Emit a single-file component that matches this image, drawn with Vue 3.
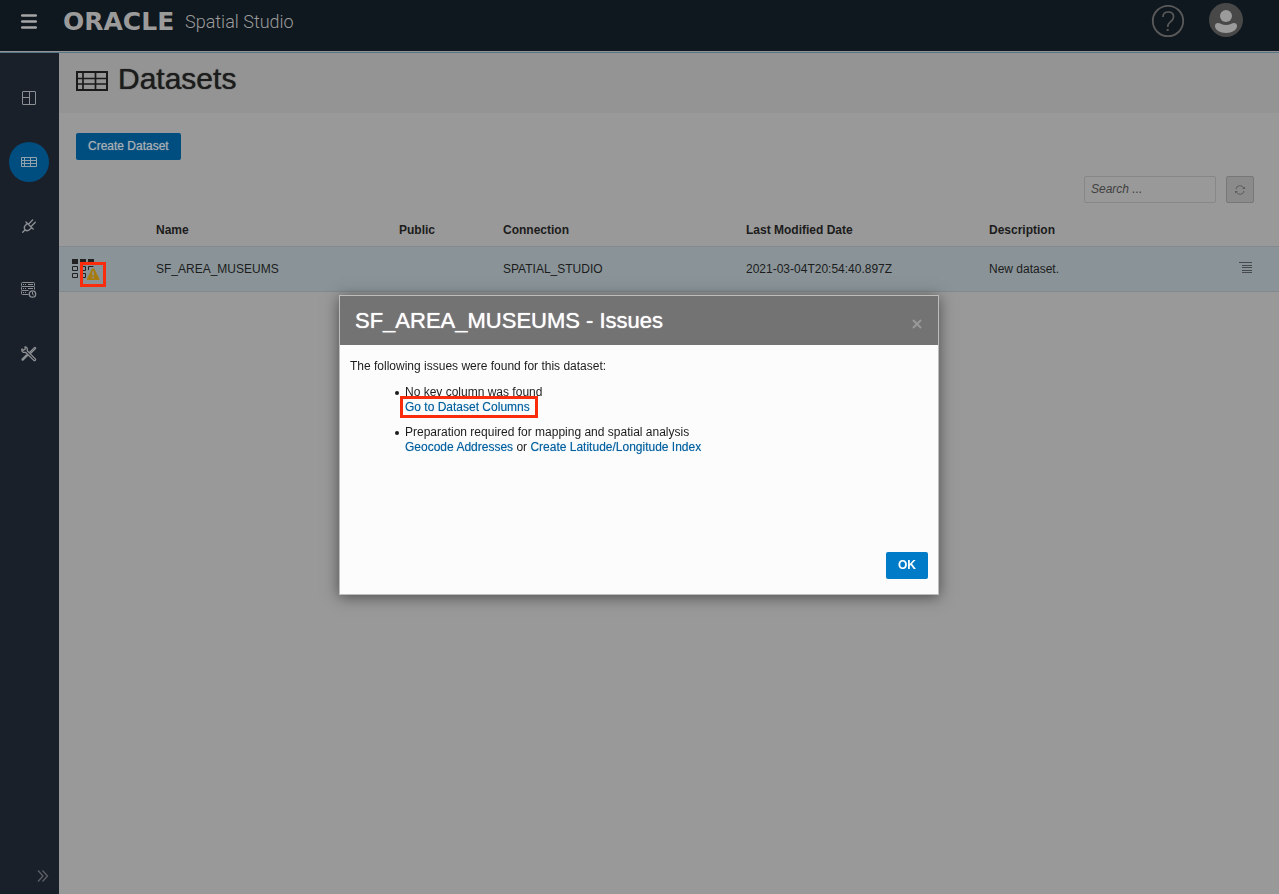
<script setup>
import { ref } from 'vue'

const query = ref('')
const columns = ['Name', 'Public', 'Connection', 'Last Modified Date', 'Description']
const rows = [
  {
    name: 'SF_AREA_MUSEUMS',
    shared: '',
    connection: 'SPATIAL_STUDIO',
    modified: '2021-03-04T20:54:40.897Z',
    description: 'New dataset.',
  },
]
</script>

<template>
  <div class="app">
    <header class="topbar">
      <button class="plain menu" aria-label="Menu">
        <svg width="16" height="16" viewBox="0 0 16 16"><path d="M1.200 2.500h13.600M1.200 8.500h13.600M1.200 14.500h13.600" stroke="#a5a5a5" stroke-width="2.600" stroke-linecap="round" /></svg>
      </button>
      <div class="brand"><span class="oracle">ORACLE</span><span class="product">Spatial Studio</span></div>
      <button class="plain help" aria-label="Help">
        <svg width="34" height="34" viewBox="0 0 34 34" fill="none" stroke="#595959">
          <circle cx="17" cy="17" r="15.2" stroke-width="1.8" />
          <path d="M12 13c0-3.300 2-5 5.300-5s5.300 1.800 5.300 4.700c0 2.500-1.500 3.700-3.300 5.200-1.800 1.400-2.600 2.300-2.600 5" stroke-width="1.700" />
          <path d="M15.700 26h2" stroke-width="2" />
        </svg>
      </button>
      <button class="plain user" aria-label="Account">
        <svg width="34" height="34" viewBox="0 0 34 34">
          <circle cx="17" cy="17" r="17" fill="#484848" />
          <circle cx="17" cy="13" r="6" fill="#9b9b9b" />
          <path d="M9 20c2 0 4 2 8 2s6-2 8-2c2 0 3 1 3 3 0 4-5 7-11 7S6 27 6 23c0-2 1-3 3-3z" fill="#9b9b9b" />
        </svg>
      </button>
    </header>

    <div class="body">
      <nav class="sidebar" aria-label="Main">
        <button class="plain nav-item" aria-label="Projects">
          <svg width="14" height="14" viewBox="0 0 14 14" fill="none" stroke="#8d9093"><rect x=".5" y=".5" width="13" height="13" rx=".5" /><path d="M7.500 .5v13M.5 6.500h7" /></svg>
        </button>
        <button class="plain nav-item active" aria-label="Datasets">
          <svg width="16" height="10" viewBox="0 0 16 10" fill="none" stroke="#92a2ac"><path d="M.5.5h15v9H.5zM.5 3.500h15M.5 6.500h15M3.500.5v9M9.500.5v9" /></svg>
        </button>
        <button class="plain nav-item" aria-label="Connections">
          <svg width="14" height="14" viewBox="0 0 14 14" fill="none" stroke="#8d9093" stroke-width="1.300" stroke-linecap="round"><path d="M.7 13.300l2.500-2.500M4.500 3.500l6 6M5.300 4.300L3.500 6.300c-1.700 1.800-1.500 3.300-.3 4.500s2.800 1.300 4.500-.3l2-1.900M6.900 4.800L10.600 1M9.300 7.300l4-4M4.500 3.500l-.6-.6M10.500 9.500l.7.6" /></svg>
        </button>
        <button class="plain nav-item" aria-label="Jobs">
          <svg width="16" height="16" viewBox="0 0 16 16" fill="none" stroke="#8d9093"><path d="M7.500 12.500h-6a1 1 0 0 1-1-1v-2a1 1 0 0 1 1-1h6M1.500.5h11a1 1 0 0 1 1 1v2a1 1 0 0 1-1 1h-11a1 1 0 0 1-1-1v-2a1 1 0 0 1 1-1zM1.500 4.500a1 1 0 0 0-1 1v2a1 1 0 0 0 1 1M12.500 4.500a1 1 0 0 1 1 1v2M2 2.500h1M4 2.500h1M7 2.500h5M2 6.500h1M4 6.500h1M7 6.500h5M2 10.500h1M4 10.500h1" /><circle cx="11.500" cy="12" r="3.200" stroke-width="1.300" /><path d="M11.500 10v2.200l1.300 .8" /></svg>
        </button>
        <button class="plain nav-item" aria-label="Tools">
          <svg width="16" height="16" viewBox="0 0 16 16" fill="none" stroke="#8d9093" stroke-width="1.300" stroke-linejoin="round"><path d="M7 9l-5 5c-.6.600-1.200-.6-.7-1.100L6.400 8M8.200 6.800l5.300-5.200c.6-.4 1.400.4 1 1L9 8M4 1l.2 2.300L2.500 4.300 1 3C.3 5.200 2 7 4.500 6.300l8.300 8.100c1 .8 2.300-.5 1.500-1.500L6.200 4.700C6.800 2.500 5.500.8 4 1z" /></svg>
        </button>
        <button class="plain expand" aria-label="Expand">
          <svg width="12" height="12" viewBox="0 0 12 12" fill="none" stroke="#5d6064" stroke-width="1.300"><path d="M1 .5L6 6l-5 5.500M5.500.5L10.500 6l-5 5.500" /></svg>
        </button>
      </nav>

      <main class="content">
        <div class="titlebar">
          <svg width="32" height="20" viewBox="0 0 32 20" fill="none" stroke="#1a1a1a" stroke-width="2"><path d="M1 1h30v18H1z" /><path d="M1 7.500h30M1 13h30M7 1v18M19.500 1v18" stroke-width="1.700" /></svg>
          <h1>Datasets</h1>
        </div>
        <div class="actions"><button class="primary create">Create Dataset</button></div>
        <div class="filter">
          <input v-model="query" type="text" placeholder="Search ..." aria-label="Search datasets" />
          <button class="refresh" aria-label="Refresh">
            <svg width="12" height="12" viewBox="0 0 12 12" fill="none" stroke="#5c5c5c"><path d="M2 5a4 4 0 0 1 7.500-1.200M10 7a4 4 0 0 1-7.500 1.200" /><path d="M8 5h3V2.500zM4 7H1v2.500z" fill="#5c5c5c" stroke="none" /></svg>
          </button>
        </div>
        <table>
          <colgroup><col class="c-icon" /><col class="c-wide" /><col class="c-public" /><col class="c-wide" /><col class="c-wide" /><col class="c-wide" /><col class="c-menu" /></colgroup>
          <thead>
            <tr><th></th><th v-for="c in columns" :key="c" scope="col">{{ c }}</th><th></th></tr>
          </thead>
          <tbody>
            <tr v-for="r in rows" :key="r.name">
              <td class="icon-cell">
                <div class="dataset-icon">
                  <svg width="28" height="22" viewBox="0 0 28 22">
                    <path d="M0 0h6v5H0zM8 0h6v5H8zM16 0h6v5h-6z" fill="#222" />
                    <path d="M.5 7.500h5v4h-5zM8.500 7.500h5v4h-5zM16.500 11V7.500h5M.5 14.500h5v4h-5zM8.500 14.500h5v4h-5z" fill="none" stroke="#222" />
                    <path d="M20 9.500h2.200l5.300 10.500q.3 1-.7 1H15.500q-1 0-.6-1z" fill="#a67c10" />
                    <path d="M20.200 12.500h1.700v4h-1.700zM20.200 17.700h1.700v1.600h-1.700z" fill="#92928c" />
                  </svg>
                  <span class="mark warn-mark"></span>
                </div>
              </td>
              <td>{{ r.name }}</td>
              <td>{{ r.shared }}</td>
              <td>{{ r.connection }}</td>
              <td>{{ r.modified }}</td>
              <td>{{ r.description }}</td>
              <td class="menu-cell">
                <button class="plain" aria-label="Row actions">
                  <svg width="13" height="12" viewBox="0 0 13 12" stroke="#464a4c"><path d="M0 .5h13M3 3.500h10M3 5.500h10M3 8.500h10M3 10.500h10" /></svg>
                </button>
              </td>
            </tr>
          </tbody>
        </table>
      </main>
    </div>

    <div class="overlay">
      <section class="dialog" role="dialog" aria-modal="true" aria-labelledby="dlg-title">
        <div class="dialog-head">
          <h2 id="dlg-title">SF_AREA_MUSEUMS - Issues</h2>
          <button class="plain close" aria-label="Close">
            <svg width="10" height="10" viewBox="0 0 10 10" stroke="#999" stroke-width="2"><path d="M1 1l8 8M9 1L1 9" /></svg>
          </button>
        </div>
        <div class="dialog-body">
          <p>The following issues were found for this dataset:</p>
          <ul>
            <li>No key column was found<br /><span class="marked"><a href="#columns">Go to Dataset Columns</a><span class="mark link-mark"></span></span></li>
            <li>Preparation required for mapping and spatial analysis<br /><a href="#geocode">Geocode Addresses</a> or <a href="#index">Create Latitude/Longitude Index</a></li>
          </ul>
        </div>
        <div class="dialog-foot"><button class="ok">OK</button></div>
      </section>
    </div>
  </div>
</template>

<style>
body {
  background: #999;
}
</style>

<style scoped>
.app {
  display: flex;
  flex-direction: column;
  min-height: 100vh;
  box-sizing: border-box;
  font: 12px/15px "Liberation Sans", Arial, sans-serif;
  color: #1c1c1c;
  background: #999;
}
button {
  font: inherit;
  cursor: pointer;
}
svg {
  display: block;
}
.plain {
  display: flex;
  align-items: center;
  justify-content: center;
  padding: 0;
  border: 0;
  background: none;
}
.topbar {
  display: flex;
  align-items: center;
  height: 42px;
  padding: 0 36px 9px 21px;
  background: #10181f;
  border-bottom: 1px solid #8f9498;
  box-shadow: 0 1px 0 #587485;
  position: relative;
}
.brand {
  display: flex;
  align-items: center;
  flex: 1;
  margin-left: 26px;
  padding-top: 2px;
  color: #9b9b9b;
}
.oracle {
  width: 122px;
  font: bold 25px/26px "DejaVu Sans", sans-serif;
}
.product {
  font: 300 18px/26px Roboto, sans-serif;
  white-space: nowrap;
}
.user {
  margin-left: 24px;
}
.user svg {
  margin-bottom: 2px;
}
.body {
  display: flex;
  flex: 1;
}
.sidebar {
  display: flex;
  flex-direction: column;
  align-items: center;
  gap: 24px;
  width: 59px;
  padding: 26px 1px 12px 0;
  box-sizing: border-box;
  background: #1a202a;
}
.nav-item {
  width: 40px;
  height: 40px;
  border-radius: 50%;
}
.active {
  background: #004e80;
}
.expand {
  margin: auto 9px 0 0;
  align-self: flex-end;
}
.content {
  flex: 1;
  min-width: 0;
}
.titlebar {
  display: flex;
  align-items: center;
  gap: 10px;
  height: 55px;
  padding: 1px 17px 5px;
  background: #949494;
}
h1 {
  margin: 0;
  font-size: 30px;
  line-height: 34px;
  font-weight: 400;
  padding-bottom: 4px;
  text-shadow: 0 0 1px #222;
}
.actions {
  padding: 20px 17px 0;
}
.primary {
  display: block;
  height: 27px;
  padding: 0 12px;
  border: 0;
  border-radius: 2px;
  background: #004e80;
  color: #a8b0b5;
  text-shadow: 0 0 1px #7d8f9a;
}
.filter {
  display: flex;
  justify-content: flex-end;
  gap: 10px;
  padding: 16px 25px 11px;
}
.filter input {
  width: 132px;
  height: 27px;
  box-sizing: border-box;
  padding: 0 6px 2px;
  border: 1px solid #878787;
  border-radius: 2px;
  background: #999;
  color: #222;
  font: italic 12px/15px "Liberation Sans", Arial, sans-serif;
}
.filter input::placeholder {
  color: #404040;
  opacity: 1;
}
.refresh {
  display: flex;
  align-items: center;
  justify-content: center;
  width: 28px;
  height: 27px;
  padding: 0;
  border: 1px solid #777;
  border-radius: 2px;
  background: #8b8b8b;
}
table {
  width: 100%;
  table-layout: fixed;
  border-collapse: collapse;
}
.c-icon {
  width: 87px;
}
.c-wide {
  width: 243px;
}
.c-public {
  width: 104px;
}
th,
td {
  padding: 0 10px;
  text-align: left;
}
th {
  height: 32px;
}
tbody tr {
  height: 45px;
  background: #8a9498;
  border-top: 1px solid #828a8d;
  border-bottom: 1px solid #828a8d;
}
.icon-cell {
  padding: 2px 0 0 13px;
}
.dataset-icon {
  position: relative;
  width: 28px;
}
.mark {
  position: absolute;
  box-sizing: border-box;
  border: 3px solid #fb2c0b;
  pointer-events: none;
}
.warn-mark {
  left: 8px;
  top: 3px;
  width: 26px;
  height: 25px;
}
.menu-cell {
  padding: 0 0 2px 17px;
}
.overlay {
  position: fixed;
  inset: 0;
  display: flex;
  align-items: center;
  justify-content: center;
  padding: 0 1px 4px 0;
}
.dialog {
  display: flex;
  flex-direction: column;
  width: 600px;
  min-height: 300px;
  box-sizing: border-box;
  border: 1px solid #bdbdbd;
  background: #fcfcfc;
  box-shadow: 0 2px 14px rgba(0, 0, 0, 0.5);
}
.dialog-head {
  display: flex;
  align-items: center;
  justify-content: space-between;
  height: 49px;
  padding: 0 16px 0 15px;
  background: #737373;
  color: #fff;
}
h2 {
  margin: 0;
  font-size: 22px;
  line-height: 26px;
  font-weight: 400;
  text-shadow: 0 0 1px #fff;
}
.close {
  padding-top: 6px;
}
.dialog-body {
  flex: 1;
  padding: 14px 10px;
}
.dialog-body p {
  margin: 0 0 11px;
}
ul {
  margin: 0;
  padding: 0 0 0 55px;
  list-style: none;
}
li {
  position: relative;
}
li::before {
  content: "";
  position: absolute;
  left: -10px;
  top: 6px;
  width: 4px;
  height: 4px;
  border-radius: 50%;
  background: #1c1c1c;
}
li + li {
  margin-top: 10px;
}
a {
  color: #00609f;
  text-decoration: none;
  text-shadow: 0 0 1px #8ab4d2;
}
.marked {
  position: relative;
}
.link-mark {
  inset: -4px -8px -4px -5px;
}
.dialog-foot {
  display: flex;
  justify-content: flex-end;
  padding: 0 10px 15px;
}
.ok {
  height: 27px;
  padding: 0 12px;
  border: 0;
  border-radius: 2px;
  background: #007bc8;
  color: #fff;
  font-weight: 700;
}
</style>
